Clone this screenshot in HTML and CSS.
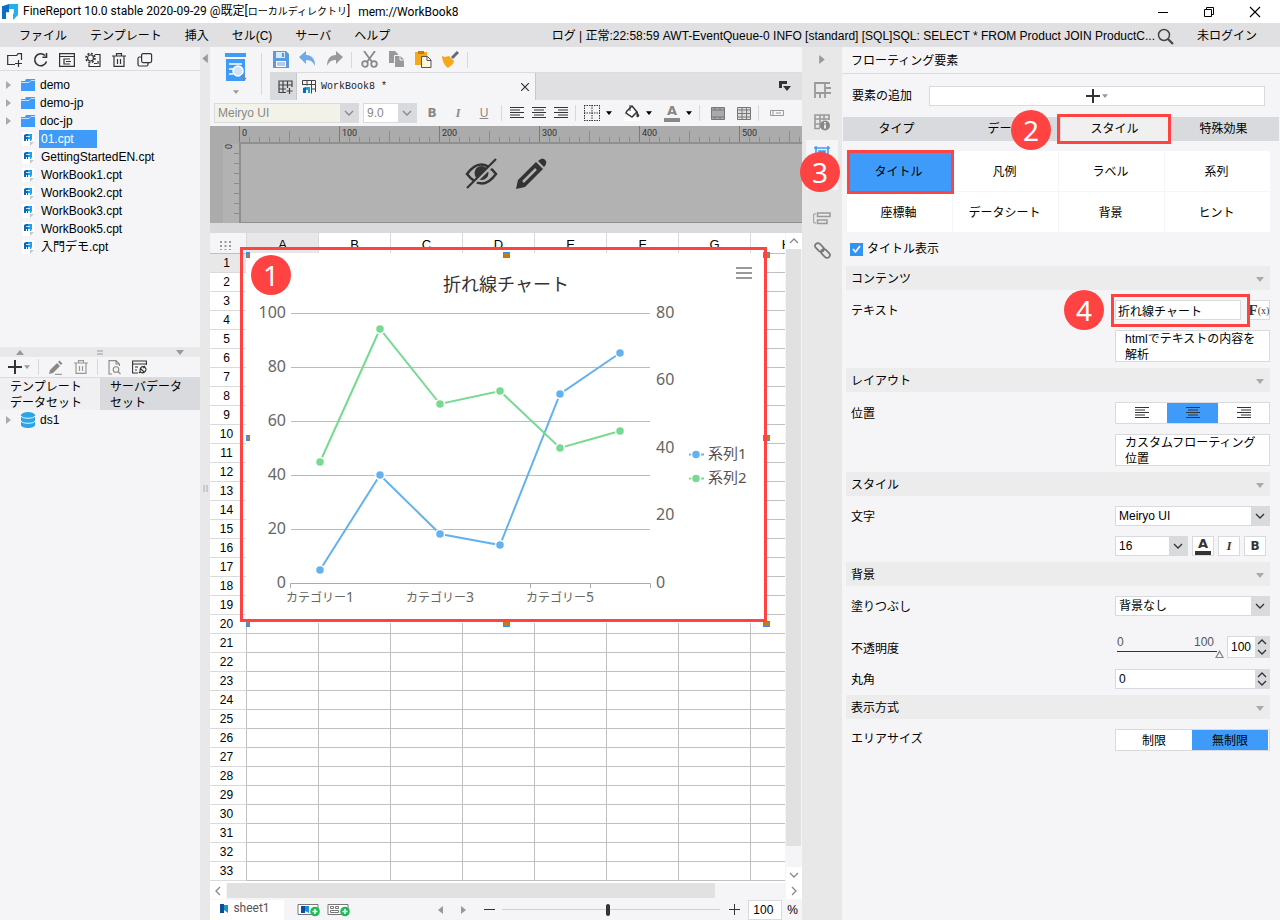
FILE: index.html
```html
<!DOCTYPE html>
<html lang="ja">
<head>
<meta charset="utf-8">
<title>FineReport 10.0</title>
<link rel="stylesheet" href="styles.css">
</head>
<body>
<svg class="defs" width="0" height="0" aria-hidden="true">
  <symbol id="logo" viewBox="0 0 16 18"><path d="M1 3l6-2v9H4v6H0V3z" fill="#0d6fc4"/><path d="M7 1h9v11l-5 5V6H7z" fill="#22b0ea"/><path d="M4 10h7v-4" fill="none" stroke="#fff" stroke-width="1.5"/></symbol>
  <symbol id="folder" viewBox="0 0 14 12"><path d="M0 2h4l1-2h9v12H0z" fill="#3f9bfa"/><path d="M0 3.500h8l2-2h4" stroke="#bfe0ff" fill="none"/></symbol>
  <symbol id="file" viewBox="0 0 12 14"><path d="M0 0h12v10l-4 4H0z" fill="#fff"/><path d="M8 14v-4h4z" fill="#c8c8cc"/><path d="M2 3l2-1h2v7H5V7H4v2H2z" fill="#0b67b8"/><path d="M6 2h4v5L9 9H8V7H6z" fill="#1ba3e6"/><path d="M4 4.500h4" stroke="#fff" stroke-width=".8"/></symbol>
  <symbol id="chev" viewBox="0 0 10 6"><path d="M1 1l4 4 4-4" fill="none" stroke="currentColor" stroke-width="1.300"/></symbol>
  <symbol id="chev-up" viewBox="0 0 10 6"><path d="M1 5l4-4 4 4" fill="none" stroke="currentColor" stroke-width="1.300"/></symbol>
  <symbol id="tri" viewBox="0 0 8 5"><path d="M0 0h8L4 5z" fill="currentColor"/></symbol>
  <symbol id="tri-up" viewBox="0 0 8 5"><path d="M0 5h8L4 0z" fill="currentColor"/></symbol>
  <symbol id="tri-r" viewBox="0 0 5 8"><path d="M0 0v8l5-4z" fill="currentColor"/></symbol>
  <symbol id="tri-l" viewBox="0 0 5 8"><path d="M5 0v8L0 4z" fill="currentColor"/></symbol>
  <symbol id="plus" viewBox="0 0 14 14"><path d="M7 0v14M0 7h14" stroke="#333" stroke-width="2"/></symbol>
  <symbol id="al" viewBox="0 0 14 12"><path d="M0 .5h14M0 3h10M0 5.500h14M0 8h10M0 10.500h14" stroke="#333" stroke-width="1.200"/></symbol>
  <symbol id="ac" viewBox="0 0 14 12"><path d="M0 .5h14M2 3h10M0 5.500h14M2 8h10M0 10.500h14" stroke="#333" stroke-width="1.200"/></symbol>
  <symbol id="ar" viewBox="0 0 14 12"><path d="M0 .5h14M4 3h10M0 5.500h14M4 8h10M0 10.500h14" stroke="#333" stroke-width="1.200"/></symbol>
  <symbol id="trash" viewBox="0 0 14 14"><path d="M0 3h14M4.500 3V.7h5V3M2 3v10.300h10V3M5.500 6v5M8.500 6v5" fill="none" stroke="currentColor" stroke-width="1.200"/></symbol>
</svg>

<div class="app">
  <header class="titlebar">
    <svg class="app-logo" width="16" height="18"><use href="#logo"/></svg>
    <span class="app-title">FineReport 10.0 stable 2020-09-29 @既定[<span class="dense">ローカルディレクトリ</span>]</span>
    <span class="app-doc">mem://WorkBook8</span>
    <div class="win-buttons">
      <button aria-label="最小化"><svg width="12" height="12"><path d="M1 6.500h10" stroke="#000"/></svg></button>
      <button aria-label="元に戻す"><svg width="12" height="12" fill="none" stroke="#000"><path d="M1.500 3.500h7v7h-7zM3.500 3.500v-2h7v7h-2"/></svg></button>
      <button aria-label="閉じる"><svg width="12" height="12"><path d="M1 1l10 10M11 1L1 11" stroke="#000" stroke-width="1.100"/></svg></button>
    </div>
  </header>

  <nav class="menubar">
    <button>ファイル</button><button>テンプレート</button><button>挿入</button><button>セル(C)</button><button>サーバ</button><button>ヘルプ</button>
    <span class="log">ログ | 正常:22:58:59 AWT-EventQueue-0 INFO [standard] [SQL]SQL: SELECT * FROM Product JOIN ProductC...</span>
    <button class="icon-btn" aria-label="検索"><svg width="17" height="17" fill="none" stroke="#444"><circle cx="7" cy="7" r="5.500" stroke-width="1.500"/><path d="M11 11l5 5" stroke-width="2.200"/></svg></button>
    <a class="login" href="#">未ログイン</a>
  </nav>

  <div class="workspace">
    <aside class="sidebar">
      <div class="files">
        <div class="tools">
          <button aria-label="新規"><svg width="16" height="16" fill="none" stroke="#333" stroke-width="1.200"><path d="M8 12.500H.7v-9h9l1.300-1.800h3.500V8M11.500 8v7M8 11.500h7"/></svg></button>
          <button aria-label="更新"><svg width="16" height="16" fill="none" stroke="#333" stroke-width="1.600"><path d="M13.500 9.500A6 6 0 1 1 12 3.500M13.500 1v4.200H9.500"/></svg></button>
          <button aria-label="一覧"><svg width="16" height="16" fill="none" stroke="#333" stroke-width="1.200"><path d="M.6 1.600h14.800v12.800H.6zM.6 4.500h15M5 6.500v6M5 7h6M7 9.500h5M5 12h6"/></svg></button>
          <button aria-label="設定"><svg width="16" height="16" fill="none" stroke="#333" stroke-width="1.200"><circle cx="5.500" cy="6" r="3" /><circle cx="5.500" cy="6" r="4.500" stroke-dasharray="2 1.500" stroke-width="1.600"/><path d="M10 2.500h5v12H4v-3M9 11.500h3M13 9v3"/></svg></button>
          <button aria-label="削除"><svg class="dark" width="14" height="14"><use href="#trash"/></svg></button>
          <button aria-label="複製"><svg width="16" height="16" fill="none" stroke="#333" stroke-width="1.200"><rect x="4.600" y="1.600" width="10" height="9" rx="1.500"/><path d="M4 5H2.500Q1 5 1 6.500v6Q1 14 2.500 14h7q1.500 0 1.500-1.500V11"/></svg></button>
        </div>
        <ul class="tree">
          <li><svg class="exp" width="5" height="8"><use href="#tri-r"/></svg><svg width="14" height="12"><use href="#folder"/></svg><span>demo</span></li>
          <li><svg class="exp" width="5" height="8"><use href="#tri-r"/></svg><svg width="14" height="12"><use href="#folder"/></svg><span>demo-jp</span></li>
          <li><svg class="exp" width="5" height="8"><use href="#tri-r"/></svg><svg width="14" height="12"><use href="#folder"/></svg><span>doc-jp</span></li>
          <li class="leaf"><svg width="12" height="14"><use href="#file"/></svg><span class="selected">01.cpt</span></li>
          <li class="leaf"><svg width="12" height="14"><use href="#file"/></svg><span>GettingStartedEN.cpt</span></li>
          <li class="leaf"><svg width="12" height="14"><use href="#file"/></svg><span>WorkBook1.cpt</span></li>
          <li class="leaf"><svg width="12" height="14"><use href="#file"/></svg><span>WorkBook2.cpt</span></li>
          <li class="leaf"><svg width="12" height="14"><use href="#file"/></svg><span>WorkBook3.cpt</span></li>
          <li class="leaf"><svg width="12" height="14"><use href="#file"/></svg><span>WorkBook5.cpt</span></li>
          <li class="leaf"><svg width="12" height="14"><use href="#file"/></svg><span>入門デモ.cpt</span></li>
        </ul>
      </div>
      <div class="hsplit"><svg width="10" height="5"><use href="#tri-up"/></svg><svg width="6" height="5"><path d="M0 1h6M0 4h6" stroke="#999"/></svg><svg width="10" height="5"><use href="#tri"/></svg></div>
      <div class="datasets">
        <div class="tools ds-tools">
          <button aria-label="追加"><svg width="14" height="14"><use href="#plus"/></svg><svg class="grey" width="6" height="4"><use href="#tri"/></svg></button>
          <i class="sep"></i>
          <button aria-label="編集"><svg width="15" height="15"><path d="M1 14l1-4 7-7 3 3-7 7zM10 2l1.500-1.500 3 3L13 5z" fill="#888"/><path d="M7 14.300h7" stroke="#888"/></svg></button>
          <button aria-label="削除"><svg class="grey" width="14" height="14"><use href="#trash"/></svg></button>
          <i class="sep"></i>
          <button aria-label="プレビュー"><svg width="14" height="15" fill="none" stroke="#888" stroke-width="1.100"><path d="M4 14H1V.6h7l3.500 3.500v2M8 .6V4h3.500"/><circle cx="8" cy="9.500" r="2.800"/><path d="M10 11.500l2.500 2.500"/></svg></button>
          <button aria-label="接続"><svg width="15" height="14" fill="none" stroke="#333" stroke-width="1.100"><path d="M6 13H.6V1h13.800v4M.6 4h14M3 7h3M3 10h2"/><path d="M8 8l4 4M13 6l-2 2M7 13l1.500-1.500M9 7.500q2-2 4 0t0 4-4 1-0-5"/></svg></button>
        </div>
        <div class="ds-tabs"><button class="active">テンプレートデータセット</button><button>サーバデータセット</button></div>
        <ul class="tree ds-tree"><li><svg class="exp" width="5" height="8"><use href="#tri-r"/></svg><svg width="14" height="16"><g fill="#2aa5e6"><path d="M0 3v10c0 4 14 4 14 0V3z"/><ellipse cx="7" cy="3" rx="7" ry="3"/></g><path d="M0 4c1 3 13 3 14 0M0 9c1 3 13 3 14 0" fill="none" stroke="#fff" stroke-width=".9"/></svg><span>ds1</span></li></ul>
      </div>
    </aside>
    <div class="vsplit"><svg width="6" height="9"><use href="#tri-l"/></svg><svg width="5" height="7"><path d="M1 0v7M4 0v7" stroke="#aaa"/></svg></div>

    <main class="designer">
      <div class="top">
        <button class="preview" aria-label="プレビュー"><svg width="22" height="30"><path d="M0 0h21v4H0zM1 6h19v22H1z" fill="#3f9bfa"/><path d="M4 11h13M4 16h4M4 21h4" stroke="#fff" stroke-width="1.600"/><circle cx="13" cy="18" r="5" fill="#cfe4fa" stroke="#fff" stroke-width="1.500"/><path d="M16.500 22l4 4.500" stroke="#7b8794" stroke-width="2.500"/></svg><svg class="grey" width="6" height="4"><use href="#tri"/></svg></button>
        <div class="top-main">
          <div class="main-tools">
            <button aria-label="保存"><svg width="17" height="17"><path d="M1 0h13l3 3v14H1z" fill="#5a9be0"/><path d="M4 1h9v6H4z" fill="#d8e9fa"/><path d="M10 2h2v4h-2z" fill="#5a9be0"/><path d="M4 10h10v6H4z" fill="#fff"/><path d="M5 12h8M5 14h8" stroke="#5a9be0"/></svg></button>
            <button aria-label="元に戻す"><svg width="17" height="17"><path d="M0 6l7-6v4c6 0 9 4 9 11-2-4-4-6-9-6v4z" fill="#6caae8"/></svg></button>
            <button aria-label="やり直し"><svg width="17" height="17"><path d="M17 6l-7-6v4C4 4 1 8 1 15c2-4 4-6 9-6v4z" fill="#999"/></svg></button>
            <i class="sep"></i>
            <button aria-label="切り取り"><svg width="17" height="17" fill="none" stroke="#888" stroke-width="1.800"><path d="M3 0l8 11M14 0L6 11"/><circle cx="4" cy="13" r="2.800"/><circle cx="13" cy="13" r="2.800"/></svg></button>
            <button aria-label="コピー"><svg width="17" height="17"><path d="M1 0h6l3 3v9H1z" fill="#999"/><path d="M6.500 4.500h6l4 4v8h-10z" fill="#999" stroke="#f5f5f7"/><path d="M12 5v4h4" fill="none" stroke="#f5f5f7"/></svg></button>
            <button aria-label="貼り付け"><svg width="17" height="17"><path d="M0 1h12v13H0z" fill="#f5a81c"/><path d="M3 0h6v3H3z" fill="#c47c12"/><path d="M6.500 5.500h6l3.500 3.500v7.500H6.500z" fill="#fff8e0" stroke="#555"/><path d="M12 6v3.500h4" fill="none" stroke="#555"/></svg></button>
            <button aria-label="書式"><svg width="17" height="17"><path d="M16 1l-6 6" stroke="#666a78" stroke-width="3"/><path d="M0 5l3 1 4-1 5 5-1 3-5 4C3 15 0 10 0 5z" fill="#f5a81c"/></svg></button>
            <i class="sep"></i>
          </div>
          <div class="doc-tabs">
            <button class="new-tab" aria-label="新しいシート"><svg width="15" height="14" fill="none" stroke="#444" stroke-width="1.200"><path d="M8 12.500H1V1h13v6M1 5h13M5 1v11.500M9.500 1v7M1 9h7M11.500 8v6M8.500 11h6"/></svg></button>
            <div class="doc-tab"><svg width="14" height="14" fill="none" stroke="#444"><path d="M.5 5V.5h13V12M.5 4.500h13M5 .5v5M9.500 .5v13M9 9h5"/><path d="M1 8l3-1v6H1z" fill="#0b67b8" stroke="none"/><path d="M4 7h4v6H6v-3H4z" fill="#1ba3e6" stroke="none"/></svg><span>WorkBook8 *</span><button aria-label="タブを閉じる"><svg width="8" height="8"><path d="M0 0l8 8M8 0L0 8" stroke="#333" stroke-width="1.200"/></svg></button></div>
            <button class="tab-list" aria-label="タブ一覧"><svg width="12" height="11"><path d="M0 0h8v3H3v4H0z" fill="#333"/><path d="M4 5h8L8 10z" fill="#333"/></svg></button>
          </div>
        </div>
      </div>

      <div class="format">
        <span class="select font-name"><select aria-label="フォント" disabled><option>Meiryo UI</option></select><svg width="10" height="6"><use href="#chev"/></svg></span>
        <span class="select font-size"><select aria-label="サイズ" disabled><option>9.0</option></select><svg width="10" height="6"><use href="#chev"/></svg></span>
        <span class="fmt-group"><button class="bold fmt">B</button><button class="ital fmt">I</button><button class="under fmt">U</button></span>
        <i class="sep"></i>
        <button aria-label="左揃え"><svg width="14" height="12"><use href="#al"/></svg></button><button aria-label="中央揃え"><svg width="14" height="12"><use href="#ac"/></svg></button><button aria-label="右揃え"><svg width="14" height="12"><use href="#ar"/></svg></button>
        <i class="sep"></i>
        <button class="drop" aria-label="罫線"><svg width="16" height="16" fill="none" stroke="#333"><path d="M0 .5h16M0 15.500h16M.5 0v16M15.500 0v16M8 0v16M0 8h16" stroke-dasharray="1.500 1"/></svg><svg width="6" height="4"><use href="#tri"/></svg></button>
        <button class="drop fill" aria-label="塗り"><svg width="16" height="16"><path d="M0 12h16v4H0z" fill="#fff"/><path d="M3 6l5-5 5 6-5 5-6-4z" fill="#fff" stroke="#333" stroke-width="1.500"/><path d="M6 0v6M13 7l2 4-2 1z" stroke="#333" fill="#333"/></svg><svg width="6" height="4"><use href="#tri"/></svg></button>
        <button class="drop fill" aria-label="文字色"><span class="letter-a">A</span><svg width="6" height="4"><use href="#tri"/></svg></button>
        <i class="sep wide-gap"></i>
        <button aria-label="結合"><svg width="14" height="13" fill="#aaa" stroke="#777"><path d="M.5 .5h13v12H.5zM0 3h14M0 10h14M4 .5V3M9 .5V3M4 10v3M9 10v3"/></svg></button>
        <button class="fill" aria-label="結合解除"><svg width="14" height="13" fill="#ddd" stroke="#777"><path d="M.5 .5h13v12H.5zM0 3h14M0 6.500h14M0 10h14M5 0v13M9.500 0v13"/></svg></button>
        <i class="sep wide-gap"></i>
        <button aria-label="ウィジェット"><svg width="14" height="6" fill="none" stroke="#999"><path d="M.5 .5h13v5H.5zM3 0v6M6 3h5"/></svg></button>
      </div>

      <div class="report-block">
        <div class="ruler"><span>0</span><span>100</span><span>200</span><span>300</span><span>400</span><span>500</span></div>
        <div class="block-row">
          <div class="vruler"><span>0</span></div>
          <div class="block-canvas">
            <svg width="34" height="32"><path d="M2 16q14-19 29 0-14 19-29 0z" fill="none" stroke="#333" stroke-width="2.500"/><circle cx="16.500" cy="15" r="7" fill="#333"/><path d="M3 31L33 2" stroke="#b2b2b2" stroke-width="3"/><path d="M2 30L31 1" stroke="#333" stroke-width="2.200"/></svg>
            <svg width="32" height="32"><path d="M1 31l2-9L21 4l7 7-18 18z" fill="#333"/><path d="M23 3q5-5 8 0 1 3-2 6z" fill="#333"/><path d="M8 24L21 11" stroke="#b2b2b2" stroke-width="2.500"/></svg>
          </div>
        </div>
      </div>

      <div class="sheet-area">
        <div class="sheet">
          <table class="cells"><thead><tr><th class="corner"><svg width="11" height="9"><path d="M0 1h11M0 5h11M0 9h11" stroke="#999" stroke-width="2" stroke-dasharray="2 2.500"/></svg></th><th class="on">A</th><th>B</th><th>C</th><th>D</th><th>E</th><th>F</th><th>G</th><th>H</th></tr></thead><tbody id="rows"></tbody></table>
          <figure class="float-chart">
            <svg viewBox="246 253 520 370" width="520" height="370" role="img" aria-label="折れ線チャート">
              <text x="506" y="291" class="c-title" text-anchor="middle">折れ線チャート</text>
              <path d="M736 268h16M736 273h16M736 278h16" stroke="#999" stroke-width="2"/>
              <path d="M291 313.500h359M291 367.500h359M291 421.500h359M291 475.500h359M291 529.500h359" stroke="#bbb"/>
              <path d="M290.500 588v-4.500h360v4.500M530.500 583v5M590.500 583v5" fill="none" stroke="#aaa"/>
              <g class="c-axis" text-anchor="end"><text x="286" y="318">100</text><text x="286" y="372">80</text><text x="286" y="426">60</text><text x="286" y="480">40</text><text x="286" y="534">20</text><text x="286" y="588">0</text></g>
              <g class="c-axis"><text x="656" y="318">80</text><text x="656" y="385">60</text><text x="656" y="453">40</text><text x="656" y="520">20</text><text x="656" y="588">0</text></g>
              <g class="c-cat" text-anchor="middle"><text x="320" y="602">カテゴリー<tspan>1</tspan></text><text x="440" y="602">カテゴリー<tspan>3</tspan></text><text x="560" y="602">カテゴリー<tspan>5</tspan></text></g>
              <g class="s1"><polyline points="320,570 380,475 440,534 500,545 560,394 620,353"/><circle cx="320" cy="570" r="4.500"/><circle cx="380" cy="475" r="4.500"/><circle cx="440" cy="534" r="4.500"/><circle cx="500" cy="545" r="4.500"/><circle cx="560" cy="394" r="4.500"/><circle cx="620" cy="353" r="4.500"/><path d="M689 454.500h15"/><circle cx="696" cy="454.500" r="4.500"/></g>
              <g class="s2"><polyline points="320,462 380,329 440,404 500,391 560,448 620,431"/><circle cx="320" cy="462" r="4.500"/><circle cx="380" cy="329" r="4.500"/><circle cx="440" cy="404" r="4.500"/><circle cx="500" cy="391" r="4.500"/><circle cx="560" cy="448" r="4.500"/><circle cx="620" cy="431" r="4.500"/><path d="M689 478.500h15"/><circle cx="696" cy="478.500" r="4.500"/></g>
              <g class="c-leg"><text x="708" y="459">系列1</text><text x="708" y="483">系列2</text></g>
            </svg>
            <i class="h tl"></i><i class="h tc"></i><i class="h tr"></i><i class="h ml"></i><i class="h mr"></i><i class="h bl"></i><i class="h bc"></i><i class="h br"></i>
            <span class="mark-box chart-box"></span><span class="mark m1">1</span>
          </figure>
        </div>
        <div class="vscroll"><button aria-label="上へ"><svg width="10" height="6"><use href="#chev-up"/></svg></button><i></i><button aria-label="下へ"><svg width="10" height="6"><use href="#chev"/></svg></button></div>
      </div>
      <div class="hscroll"><button aria-label="左へ"><svg width="6" height="10"><path d="M5 1L1 5l4 4" fill="none" stroke="#888" stroke-width="1.300"/></svg></button><i></i><button aria-label="右へ"><svg width="6" height="10"><path d="M1 1l4 4-4 4" fill="none" stroke="#888" stroke-width="1.300"/></svg></button></div>
      <footer class="status">
        <button class="sheet-tab"><svg width="8" height="9"><path d="M0 0h4v9H0z" fill="#0b4f96"/><path d="M4 1h4v8L4 6z" fill="#1b93dc"/></svg>sheet1</button>
        <button aria-label="シート追加"><svg width="23" height="14"><path d="M1 1.500h20v10H1z" fill="#fff" stroke="#777"/><path d="M4 3h4v7H4z" fill="#0b4f96"/><path d="M8 3h4v7L8 8z" fill="#1b93dc"/><circle cx="18" cy="8.500" r="4.800" fill="#1dbb53"/><path d="M18 6v5M15.500 8.500h5" stroke="#fff" stroke-width="1.500"/></svg></button>
        <button aria-label="フォーム追加"><svg width="23" height="14"><path d="M1 1.500h20v10H1z" fill="#fff" stroke="#777"/><path d="M3.500 3.500h3v2h-3zM8.500 3.500h3v2h-3zM3.500 7.500h8v2h-8z" fill="none" stroke="#777"/><circle cx="18" cy="8.500" r="4.800" fill="#1dbb53"/><path d="M18 6v5M15.500 8.500h5" stroke="#fff" stroke-width="1.500"/></svg></button>
        <div class="zoom">
          <button class="grey" aria-label="前へ"><svg width="5" height="8"><use href="#tri-l"/></svg></button><button class="grey" aria-label="次へ"><svg width="5" height="8"><use href="#tri-r"/></svg></button>
          <button aria-label="縮小"><svg width="11" height="11"><path d="M0 5.500h11" stroke="#333"/></svg></button>
          <input class="zoom-range" type="range" min="0" max="200" value="97" aria-label="ズーム">
          <button aria-label="拡大"><svg width="11" height="11"><path d="M0 5.500h11M5.500 0v11" stroke="#333"/></svg></button>
          <label class="pct"><input type="text" value="100" aria-label="倍率"> %</label>
        </div>
      </footer>
    </main>

    <nav class="rail">
      <button class="grey" aria-label="折りたたむ"><svg width="6" height="9"><use href="#tri-r"/></svg></button>
      <button aria-label="セル要素"><svg width="17" height="17" fill="none" stroke="#999" stroke-width="1.800"><path d="M1 16V1h15M1 11h10V1M11 6h6M11 11h6M11 11v5M6 11v5"/></svg></button>
      <button aria-label="セル属性"><svg width="17" height="17" fill="none" stroke="#999" stroke-width="1.600"><path d="M6 14.500H1V1h14v5M1 5h14M1 10h5M6 1v13M10 1v5"/><circle cx="11" cy="11.500" r="5" fill="#888" stroke="none"/><path d="M11 8v1.500M11 10.500v4" stroke="#fff"/></svg></button>
      <button class="current" aria-label="フローティング要素"><svg width="16" height="16" fill="none" stroke="#3f9bfa" stroke-width="1.600"><path d="M0 2h16M2 0v16M14 0v16M0 14h16"/><path d="M5 5h6v6H5z" fill="#3f9bfa"/></svg><svg width="14" height="6"><path d="M0 0h14v6H0z" fill="#888"/></svg></button>
      <button class="widget" aria-label="ウィジェット"><svg width="18" height="13" fill="none" stroke="#999" stroke-width="1.500"><path d="M4.500 1h12.500v3.500H4.500zM4.500 8h9.500v3.500H4.500z"/><path d="M3 2H.7v9H3" stroke-width="1"/></svg></button>
      <button aria-label="リンク"><svg width="17" height="17" fill="none" stroke="#777" stroke-width="1.700"><rect x="-5" y="-2.800" width="10" height="5.600" rx="2.800" transform="translate(5.500 5.500) rotate(45)"/><rect x="-5" y="-2.800" width="10" height="5.600" rx="2.800" transform="translate(11.500 11.500) rotate(45)"/></svg></button>
      <span class="mark m3">3</span>
    </nav>

    <aside class="props">
      <h2>フローティング要素</h2>
      <div class="add-row"><span>要素の追加</span><button aria-label="要素の追加"><svg width="14" height="14"><use href="#plus"/></svg><svg class="grey" width="6" height="4"><use href="#tri"/></svg></button></div>
      <div class="tabs"><button>タイプ</button><button>データ</button><button class="active">スタイル<span class="mark-box tab-box"></span><span class="mark m2">2</span></button><button>特殊効果</button></div>
      <div class="subtabs"><button class="active">タイトル<span class="mark-box sub-box"></span></button><button>凡例</button><button>ラベル</button><button>系列</button><button>座標軸</button><button>データシート</button><button>背景</button><button>ヒント</button></div>
      <label class="check"><input type="checkbox" checked><svg width="9" height="8"><path d="M1 4l2.500 3L8 1" fill="none" stroke="#fff" stroke-width="1.600"/></svg>タイトル表示</label>

      <section><h3>コンテンツ<svg width="10" height="5"><use href="#tri"/></svg></h3>
        <div class="row"><label for="ttl">テキスト</label><div class="ctl text-ctl"><input id="ttl" type="text" value="折れ線チャート"><button class="fx" aria-label="数式"><b>F</b>(x)</button><span class="mark-box text-box"></span><span class="mark m4">4</span></div></div>
        <div class="row"><span></span><button class="ctl wide">htmlでテキストの内容を解析</button></div>
      </section>
      <section><h3>レイアウト<svg width="10" height="5"><use href="#tri"/></svg></h3>
        <div class="row"><span>位置</span><div class="ctl seg three"><button aria-label="左"><svg width="14" height="12"><use href="#al"/></svg></button><button class="active" aria-label="中央"><svg width="14" height="12"><use href="#ac"/></svg></button><button aria-label="右"><svg width="14" height="12"><use href="#ar"/></svg></button></div></div>
        <div class="row"><span></span><button class="ctl wide">カスタムフローティング位置</button></div>
      </section>
      <section><h3>スタイル<svg width="10" height="5"><use href="#tri"/></svg></h3>
        <div class="row"><label for="ff">文字</label><span class="ctl select"><select id="ff"><option>Meiryo UI</option></select><svg width="10" height="6"><use href="#chev"/></svg></span></div>
        <div class="row"><span></span><div class="ctl font-row"><span class="select"><select aria-label="文字サイズ"><option>16</option></select><svg width="10" height="6"><use href="#chev"/></svg></span><button aria-label="文字色"><span class="letter-a">A</span></button><button class="ital">I</button><button class="bold">B</button></div></div>
      </section>
      <section><h3>背景<svg width="10" height="5"><use href="#tri"/></svg></h3>
        <div class="row"><label for="bg">塗りつぶし</label><span class="ctl select"><select id="bg"><option>背景なし</option></select><svg width="10" height="6"><use href="#chev"/></svg></span></div>
        <div class="row opacity"><label for="op">不透明度</label><div class="ctl op-ctl"><div class="slider"><div><span>0</span><span>100</span></div><input type="range" value="100" aria-label="不透明度"></div><span class="spin"><input id="op" type="text" value="100"><span class="arrows"><svg width="10" height="6"><use href="#chev-up"/></svg><svg width="10" height="6"><use href="#chev"/></svg></span></span></div></div>
        <div class="row"><label for="rad">丸角</label><span class="ctl spin"><input id="rad" type="text" value="0"><span class="arrows"><svg width="10" height="6"><use href="#chev-up"/></svg><svg width="10" height="6"><use href="#chev"/></svg></span></span></div>
      </section>
      <section><h3>表示方式<svg width="10" height="5"><use href="#tri"/></svg></h3>
        <div class="row area"><span>エリアサイズ</span><div class="ctl seg two"><button>制限</button><button class="active">無制限</button></div></div>
      </section>
    </aside>
  </div>
</div>
<script src="script.js"></script>
</body>
</html>
```
FILE: styles.css
```css
* { box-sizing: border-box; }
body { margin: 0; font: 12px/16px "Liberation Sans", "Noto Sans CJK JP", sans-serif; color: #000; }
button, input, select { font: inherit; color: inherit; margin: 0; padding: 0; border: 0; border-radius: 0; background: none; }
button { display: flex; align-items: center; justify-content: center; }
ul, h2, h3, figure { margin: 0; padding: 0; font-size: 12px; font-weight: normal; list-style: none; }
svg { display: block; flex: none; }
.defs { position: absolute; }
.grey { color: #999; }
.dark { color: #333; }
.sep { flex: none; width: 1px; height: 16px; background: #d8d8da; }

.app { display: flex; flex-direction: column; height: 100vh; overflow: hidden; background: #f5f5f7; }
.titlebar { display: flex; align-items: center; height: 23px; flex: none; background: #fff; padding-left: 2px; font-family: Roboto, "Noto Sans CJK JP", sans-serif; white-space: nowrap; }
.app-title { margin-left: 5px; }
.dense { font-size: 10px; }
.app-doc { margin-left: 8px; }
.win-buttons { margin-left: auto; display: flex; padding-right: 2px; }
.win-buttons button { width: 46px; height: 20px; }

.menubar { display: flex; align-items: center; height: 24px; flex: none; background: #e0e0e2; padding: 2px 0 0 19px; gap: 23px; white-space: nowrap; }
.log { margin-left: auto; }
.menubar .icon-btn { margin-left: -21px; }
.login { color: inherit; text-decoration: none; padding-right: 23px; }

.workspace { flex: 1; min-height: 0; display: grid; grid-template-columns: 200px 10px minmax(0, 1fr) 40px 438px; }
.sidebar { display: grid; grid-template-rows: 300px 10px minmax(0, 1fr); }
.tools { display: flex; align-items: center; height: 24px; padding: 2px 0 0 7px; gap: 10px; border-bottom: 1px solid #dcdcde; }
.tools button { width: 16px; height: 16px; }
.tree { padding-top: 5px; }
.tree li { display: flex; align-items: center; height: 18px; padding-left: 6px; }
.tree .exp { margin-right: 10px; color: #aaa; }
.tree li span { padding: 0 2px; margin-left: 3px; line-height: 18px; }
.tree .leaf { padding-left: 22px; }
.tree .leaf svg { margin-right: 2px; }
.tree .selected { background: #3f9bfa; color: #fff; width: 58px; }
.hsplit { background: #e8e8e8; color: #999; display: flex; align-items: center; justify-content: space-between; padding: 0 15px; }
.ds-tools { height: 21px; padding: 0 0 0 8px; gap: 8px; }
.ds-tools button { width: 17px; }
.ds-tools button:first-child { width: 22px; gap: 2px; }
.ds-tabs { display: grid; grid-template-columns: 1fr 1fr; }
.ds-tabs button { height: 32px; background: #d9dadd; text-align: left; padding: 2px 10px 0; justify-content: flex-start; }
.ds-tabs .active { background: #f0f0f2; }
.ds-tree { padding-top: 1px; }
.vsplit { background: #e8e8e8; color: #999; display: flex; flex-direction: column; align-items: center; padding-top: 7px; }
.vsplit svg + svg { margin-top: 422px; }

.designer { display: flex; flex-direction: column; min-width: 0; }
.top { display: flex; height: 53px; flex: none; }
.preview { width: 60px; flex-direction: column; gap: 7px; position: relative; padding-right: 9px; }
.preview::after { content: ""; position: absolute; right: 8px; top: 6px; height: 42px; width: 1px; background: #d8d8da; }
.top-main { flex: 1; min-width: 0; display: flex; flex-direction: column; }
.main-tools { display: flex; align-items: center; gap: 9px; height: 26px; padding-left: 1px; border-bottom: 1px solid #dcdcde; }
.main-tools button { width: 18px; }
.main-tools .sep { margin: 0 -1px; }
.doc-tabs { display: flex; flex: 1; background: #e0e0e2; }
.new-tab { width: 27px; background: #d9dadd; border-right: 1px solid #c8c8cc; padding-left: 4px; }
.doc-tab { display: flex; align-items: center; width: 239px; background: #f5f5f7; border-right: 1px solid #c8c8cc; padding: 0 6px 0 5px; gap: 5px; font: 10px "Liberation Mono", monospace; color: #222; }
.doc-tab button { margin-left: auto; }
.tab-list { margin-left: auto; width: 34px; }

.format { display: flex; align-items: center; height: 26px; flex: none; padding-left: 4px; gap: 8px; color: #333; }
.select { display: flex; align-items: center; position: relative; height: 20px; border: 1px solid #d9dadd; background: #fff; color: #333; }
.select select { appearance: none; width: 100%; height: 100%; padding: 0 22px 0 3px; color: #000; opacity: 1; outline: 0; }
.select svg { position: absolute; right: 0; top: 0; width: 18px; height: 18px; padding: 6px 4px; background: #d9dadd; pointer-events: none; }
.font-name { width: 145px; background: #f2f2e8; margin-right: -4px; }
.font-size { width: 54px; }
.format .select, .format .select select { color: #888; }
.fmt-group { display: flex; gap: 8px; margin: 0 1px 0 -2px; }
.fmt { width: 18px; color: #888; font-size: 12px; }
.bold { font-family: "DejaVu Sans", sans-serif; font-weight: bold; }
.ital { font-family: "Liberation Serif", serif; font-style: italic; font-weight: bold; }
.under { text-decoration: underline; }
.drop { gap: 6px; }
.format .fill { margin-left: 4px; }
.format .wide-gap { margin: 0 3px 0 2px; }
.format .sep { margin-left: -1px; }
.drop svg + svg, .letter-a + svg { color: #000; }
.letter-a { font: bold 13px/12px "DejaVu Sans", sans-serif; border-bottom: 4px solid currentColor; width: 16px; height: 17px; text-align: center; }
.format .letter-a { color: #888; }

.report-block { flex: none; background: #ababab; border-bottom: 10px solid #dadadc; color: #333; }
.ruler { display: flex; height: 18px; margin-left: 29px; overflow: hidden; border-bottom: 2px solid #8f8f8f; font: 9px/14px Roboto, sans-serif;
  background: repeating-linear-gradient(90deg, #8c8c8c 0 1px, transparent 1px 50px) 0 100% / 100% 11px no-repeat, repeating-linear-gradient(90deg, #8c8c8c 0 1px, transparent 1px 10px) 0 100% / 100% 5px no-repeat; }
.ruler span { flex: none; width: 100px; padding-left: 2px; border-left: 1px solid #7c7c7c; }
.block-row { display: flex; height: 79px; }
.vruler { width: 31px; padding: 0 0 0 13px; border-right: 2px solid #8f8f8f; font: 9px/10px Roboto, sans-serif;
  background: repeating-linear-gradient(transparent 0 9px, #8c8c8c 9px 10px) 100% 0 / 5px 100% no-repeat, linear-gradient(90deg, #ababab 13px, #b2b2b2 13px); }
.vruler span { display: block; writing-mode: vertical-rl; height: 8px; }
.block-canvas { flex: 1; background: #b2b2b2; border-bottom: 1px solid #8f8f8f; display: flex; justify-content: center; align-items: flex-start; gap: 16px; padding: 14px 32px 0 0; }

.sheet-area { flex: 1; min-height: 0; display: flex; }
.sheet { flex: 1; position: relative; overflow: hidden; background: #fff; }
.cells { table-layout: fixed; width: 613px; border-spacing: 0; }
.cells th, .cells td { padding: 0; height: 19px; border: 0 solid #c0c0c0; border-width: 0 1px 1px 0; font-weight: normal; line-height: 18px; }
.cells th { border-color: #dadadc; text-align: center; width: 72px; }
.cells thead th { height: 21px; font-size: 13px; line-height: 16px; padding-top: 4px; border-bottom-color: #c0c0c0; }
.cells .corner { width: 37px; background: #f5f5f7; padding-left: 10px; }
.cells .on { background: #e8e8e8; }
.cells tbody th { padding-right: 3px; border-right-color: #c0c0c0; line-height: 16px; }
.float-chart { position: absolute; left: 36px; top: 20px; width: 520px; height: 370px; background: #fff; }
.c-title { font: 18px "Noto Sans CJK JP", sans-serif; fill: #333; }
.c-axis { font: 16px "Noto Sans", sans-serif; fill: #666; }
.c-cat { font: 12px "Noto Sans CJK JP", sans-serif; fill: #666; }
.c-cat tspan { font: 14px "Noto Sans", sans-serif; }
.c-leg { font: 15px "Noto Sans", "Noto Sans CJK JP", sans-serif; fill: #555; }
.s1 { fill: #63b2ee; stroke: #63b2ee; }
.s2 { fill: #76da91; stroke: #76da91; }
.s1 polyline, .s2 polyline, .s1 path, .s2 path { fill: none; stroke-width: 2; }
.s1 circle, .s2 circle { stroke: #fff; stroke-width: 1.5; }
.h { position: absolute; width: 7px; height: 6px; background: #c87a14; border: 1px solid #3f8bea; }
.tl, .ml, .bl { left: 0; width: 4px; }
.tc, .bc { left: 257px; }
.tr, .mr, .br { right: -4px; }
.tl, .tc, .tr { top: -1px; }
.ml, .mr { top: 182px; }
.bl, .bc, .br { bottom: -4px; }

.mark-box { position: absolute; border: 3px solid #ff4343; pointer-events: none; }
.mark { position: absolute; width: 40px; height: 40px; border-radius: 50%; background: #ff4343; color: #fff; font: 28px/40px "Noto Sans", sans-serif; text-align: center; z-index: 3; }
.chart-box { left: -6px; top: -6px; right: -1px; bottom: 1px; }
.m1 { left: 5px; top: 2px; }
.m2 { left: -50px; top: -7px; }
.m3 { left: -2px; top: 105px; }
.m4 { left: -51px; top: -10px; }
.tab-box { inset: -3px -1px -3px -4px; z-index: 2; }
.sub-box { inset: -1px -2px -3px 0; z-index: 1; }
.text-box { inset: -6px 20px -7px -4px; }

.vscroll { width: 17px; display: flex; flex-direction: column; background: #f5f5f7; color: #888; padding-left: 1px; }
.vscroll button, .hscroll button { width: 16px; height: 16px; background: #fff; flex: none; }
.vscroll i { flex: 1; margin-bottom: 21px; background: #e1e1e1; width: 15px; }
.hscroll { display: flex; height: 16px; flex: none; justify-content: space-between; }
.hscroll i { flex: 1; margin: 0 71px 0 1px; background: #e1e1e1; height: 15px; }
.status { display: flex; align-items: center; height: 21px; flex: none; gap: 7px; }
.sheet-tab { width: 74px; height: 20px; background: #fff; color: #555; gap: 5px; font-family: Roboto, sans-serif; align-items: center; margin-right: 6px; padding: 0 4px 3px 0; }
.zoom { display: flex; align-items: center; margin-left: auto; gap: 14px; }
.zoom > .grey { margin-right: 4px; }
.zoom-range { appearance: none; width: 218px; height: 14px; margin: 0 -5px 0 -7px; background: linear-gradient(#d0d0d2, #d0d0d2) 0 50% / 100% 1px no-repeat; }
.zoom-range::-webkit-slider-thumb { appearance: none; width: 4px; height: 12px; border-radius: 2px; background: #333; }
.pct { display: flex; align-items: center; gap: 5px; margin: 0 4px 0 -6px; }
.pct input { width: 34px; height: 20px; border: 1px solid #d9dadd; background: #fff; text-align: left; padding-left: 4px; }

.rail { position: relative; background: #e8e8e8; display: flex; flex-direction: column; align-items: center; padding-top: 4px; }
.rail button { width: 32px; height: 32px; flex: none; }
.rail button:first-child { height: 16px; margin-bottom: 7px; }
.rail .current { background: #f5f5f7; height: 50px; flex-direction: column; justify-content: space-between; padding: 6px 0 0; margin-top: 2px; }
.rail .widget { margin: 12px 0 0; }

.props { display: flex; flex-direction: column; padding-left: 1px; min-width: 0; }
.props h2 { height: 27px; line-height: 28px; padding-left: 9px; border-bottom: 1px solid #dcdcde; margin-left: -1px; }
.add-row { display: flex; align-items: center; padding: 12px 15px 11px 9px; justify-content: space-between; }
.add-row button { width: 336px; height: 20px; border: 1px solid #d9dadd; background: #fff; gap: 2px; }
.tabs { display: grid; grid-template-columns: repeat(4, 1fr); background: #d9dadd; margin-right: 1px; }
.tabs button, .subtabs button { position: relative; height: 24px; padding-right: 2px; }
.tabs .active { background: #f0f0f1; }
.subtabs { display: grid; grid-template-columns: repeat(4, 1fr); gap: 1px; margin: 10px 10px 9px 4px; }
.subtabs button { height: 40px; background: #fff; padding-top: 2px; }
.subtabs .active { background: #3f9bfa; }
.check { position: relative; display: flex; align-items: center; height: 16px; gap: 4px; margin: 0 0 9px 7px; }
.check input { appearance: none; width: 13px; height: 13px; background: #3193f2; }
.check svg { position: absolute; left: 2px; }
.props section { padding: 0 10px 6px 3px; }
.props h3 { display: flex; align-items: center; justify-content: space-between; height: 24px; padding: 2px 5px 0; background: #ececed; }
.props h3 svg { color: #aaa; }
.row { display: flex; justify-content: space-between; align-items: center; margin-top: 10px; padding-left: 5px; }
.row > label, .row > span:first-child { padding-top: 2px; }
.ctl { width: 155px; position: relative; }
.wide { height: 32px; border: 1px solid #d9dadd; background: #fff; text-align: left; padding: 2px 9px 0; justify-content: flex-start; }
.text-ctl, .font-row, .op-ctl { display: flex; justify-content: space-between; }
.text-ctl input { width: 126px; height: 20px; border: 1px solid #d9dadd; background: #fff; padding-left: 2px; }
.fx { width: 22px; height: 20px; border: 1px solid #d9dadd; background: #fff; font: 10px "Liberation Serif", serif; color: #333; }
.fx b { font-size: 15px; }
.seg { display: grid; height: 22px; border: 1px solid #d9dadd; background: #fff; }
.three { grid-template-columns: repeat(3, 1fr); }
.two { grid-template-columns: 1fr 1fr; padding-right: 1px; }
.seg .active { background: #3f9bfa; }
.two button { padding-top: 2px; }
.row.area > span { padding: 0 0 2px; }
.font-row { padding-right: 4px; }
.font-row .select { width: 73px; }
.font-row button { width: 22px; height: 20px; border: 1px solid #d9dadd; background: #fff; color: #333; }
.opacity { margin-top: 20px; }
.slider { width: 109px; color: #555; padding-left: 2px; }
.slider div { display: flex; justify-content: space-between; height: 13px; line-height: 12px; padding-right: 10px; }
.slider input { display: block; appearance: none; width: 107px; height: 10px; background: linear-gradient(#333, #333) 0 2px / 100px 1px no-repeat; }
.slider input::-webkit-slider-thumb { appearance: none; width: 9px; height: 8px; background: #888; clip-path: polygon(50% 0, 100% 100%, 0 100%, 50% 0, 50% 35%, 22% 86%, 78% 86%, 50% 35%); }
.spin { display: flex; height: 20px; border: 1px solid #d9dadd; background: #fff; }
.spin input { flex: 1; min-width: 0; padding-left: 3px; }
.op-ctl .spin { width: 43px; height: 22px; }
.arrows { width: 14px; background: #d9dadd; display: flex; flex-direction: column; justify-content: space-between; align-items: center; padding: 2px 0; color: #333; }
```
FILE: script.js
```js
const body = document.getElementById("rows");
for (let n = 1; n <= 33; n++) {
  const tr = body.insertRow();
  const th = document.createElement("th");
  th.textContent = n;
  if (n === 1) th.className = "on";
  tr.append(th);
  for (let c = 0; c < 8; c++) tr.insertCell();
}
```
